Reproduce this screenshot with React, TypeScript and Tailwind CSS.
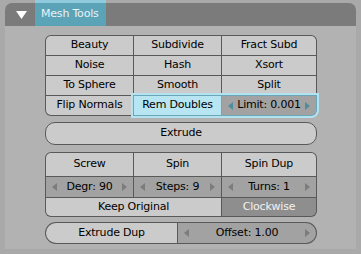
import React from "react";

const font = { fontFamily: '"DejaVu Sans", "Liberation Sans", sans-serif' };

function Arrow({ dir, color }: { dir: "l" | "r"; color: string }) {
  return (
    <svg width="5" height="8" viewBox="0 0 5 8" className="shrink-0">
      {dir === "l" ? (
        <path d="M5 0 L0 4 L5 8 Z" fill={color} />
      ) : (
        <path d="M0 0 L5 4 L0 8 Z" fill={color} />
      )}
    </svg>
  );
}

function Num({
  label,
  className = "",
  arrow = "#7c7c7c",
}: {
  label: string;
  className?: string;
  arrow?: string;
}) {
  return (
    <div className={`flex items-center justify-between px-[6px] bg-[#a2a2a2] ${className}`}>
      <Arrow dir="l" color={arrow} />
      <span>{label}</span>
      <Arrow dir="r" color={arrow} />
    </div>
  );
}

function Btn({ label, className = "" }: { label: string; className?: string }) {
  return (
    <div className={`flex items-center justify-center bg-[#cbcbcb] ${className}`}>
      {label}
    </div>
  );
}

export default function App() {
  return (
    <div
      className="w-[361px] h-[254px] bg-[#a9a9a9] pt-[3px] px-[5px] text-[11px] tracking-[-0.2px] text-black overflow-hidden"
      style={font}
    >
      {/* header */}
      <div className="h-[23px] bg-[#7b7b7b] rounded-t-[7px] flex items-stretch">
        <div className="w-[30px] flex items-center pl-[11px]">
          <svg width="11" height="8" viewBox="0 0 11 8">
            <path d="M0 0 L11 0 L5.5 8 Z" fill="#ffffff" />
          </svg>
        </div>
        <div className="-mt-[3px] h-[26px] w-[71px] flex flex-col">
          <div className="h-[3px] bg-[#8fcbdc]" />
          <div className="flex-1 bg-[#5ba3b7] text-[#e9f2f5] pl-[6px] flex items-center">
            Mesh Tools
          </div>
        </div>
      </div>

      {/* body */}
      <div className="h-[223px] bg-[#b2b2b2] pl-[40px] pt-[9px]">
        <div className="w-[272px] flex flex-col">
          {/* grid 1 */}
          <div className="grid grid-cols-[87px_87px_94px] auto-rows-[19px] gap-px p-px bg-[#595959] rounded-[6px]">
            <Btn label="Beauty" className="rounded-tl-[5px]" />
            <Btn label="Subdivide" />
            <Btn label="Fract Subd" className="rounded-tr-[5px]" />
            <Btn label="Noise" />
            <Btn label="Hash" />
            <Btn label="Xsort" />
            <Btn label="To Sphere" />
            <Btn label="Smooth" />
            <Btn label="Split" />
            <Btn label="Flip Normals" className="rounded-bl-[5px]" />
            <div className="col-span-2 -m-px p-px relative z-10 grid grid-cols-[87px_94px] gap-px bg-[#6ba7b7] rounded-br-[6px] shadow-[0_0_0_2px_#b3e3f0]">
              <div className="flex items-center justify-center bg-[#b7e5f1]">Rem Doubles</div>
              <Num
                label="Limit: 0.001"
                className="bg-[#8cc6d6] rounded-br-[5px]"
                arrow="#4f8d9e"
              />
            </div>
          </div>

          {/* extrude */}
          <div className="mt-[6px] h-[23px] rounded-[10px] border border-[#595959] bg-[#cbcbcb] flex items-center justify-center">
            Extrude
          </div>

          {/* grid 2 */}
          <div className="mt-[7px] grid grid-cols-[87px_87px_94px] grid-rows-[23px_20px_18px] gap-px p-px bg-[#595959] rounded-[6px]">
            <Btn label="Screw" className="rounded-tl-[5px]" />
            <Btn label="Spin" />
            <Btn label="Spin Dup" className="rounded-tr-[5px]" />
            <Num label="Degr: 90" />
            <Num label="Steps: 9" />
            <Num label="Turns: 1" />
            <Btn label="Keep Original" className="col-span-2 rounded-bl-[5px]" />
            <div className="flex items-center justify-center bg-[#8e8e8e] text-[#f2f2f2] rounded-br-[5px]">
              Clockwise
            </div>
          </div>

          {/* extrude dup */}
          <div className="mt-[5px] h-[22px] grid grid-cols-[131px_138px] gap-px p-px bg-[#595959] rounded-[11px]">
            <Btn label="Extrude Dup" className="rounded-l-[10px]" />
            <Num label="Offset: 1.00" className="rounded-r-[10px]" />
          </div>
        </div>
      </div>
    </div>
  );
}
